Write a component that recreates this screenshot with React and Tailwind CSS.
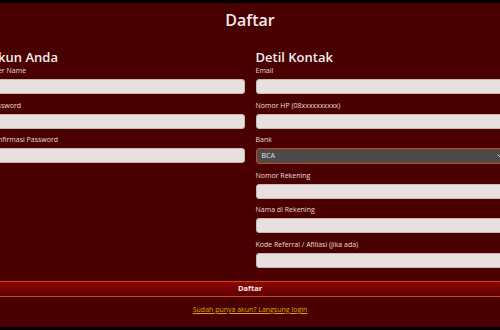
import React from 'react';

const fontStack = { fontFamily: '"Open Sans", "Noto Sans", sans-serif' };

function Field({ label, type = 'text' }) {
  return (
    <div className="mb-[6.5px]">
      <label className="block text-[7px] leading-[10px] text-[#eadcd6] mb-[3px]">{label}</label>
      <input type={type} className="block w-full h-[15px] rounded-[3px] border border-[#c9b8b4] bg-[#e8e0de] outline-none" />
    </div>
  );
}

export default function App() {
  return (
    <div className="bg-black py-[3px] h-[330px]" style={fontStack}>
      <div className="bg-[#4a0000] h-[324px] overflow-hidden flex flex-col">
        <h1 className="text-center text-[16px] font-semibold leading-[22px] text-[#f3ecec] pt-[6px]">Daftar</h1>

        <div className="flex justify-center mt-[18px]">
          <div className="w-[521px] shrink-0 grid grid-cols-2 gap-x-[11px]">
            <div>
              <h2 className="text-[13px] font-semibold leading-[16px] text-[#f3ecec] mb-[1px]">Akun Anda</h2>
              <Field label="User Name" />
              <Field label="Password" type="password" />
              <Field label="Konfirmasi Password" type="password" />
            </div>
            <div>
              <h2 className="text-[13px] font-semibold leading-[16px] text-[#f3ecec] mb-[1px]">Detil Kontak</h2>
              <Field label="Email" type="email" />
              <Field label="Nomor HP (08xxxxxxxxxx)" />
              <div className="mb-[6.5px]">
                <label className="block text-[7px] leading-[10px] text-[#eadcd6] mb-[3px]">Bank</label>
                <div className="flex items-center justify-between h-[16px] rounded-[3px] border-[1.5px] border-[#d2421f] bg-[#4b4b4b] px-[5px]">
                  <span className="text-[7px] text-[#e6e6e6]">BCA</span>
                  <svg width="6" height="4" viewBox="0 0 6 4" className="mr-[2px]">
                    <path d="M0.5 0.5 L3 3 L5.5 0.5" fill="none" stroke="#cfcfcf" strokeWidth="1" />
                  </svg>
                </div>
              </div>
              <Field label="Nomor Rekening" />
              <Field label="Nama di Rekening" />
              <Field label="Kode Referral / Afiliasi (jika ada)" />
            </div>
          </div>
        </div>

        <button className="mt-[7px] h-[16px] w-full border-y border-[#d2421f] bg-gradient-to-b from-[#8e0a02] to-[#5e0000] text-[7.5px] font-bold text-[#f3ecec]">
          Daftar
        </button>

        <div className="text-center mt-[8px] text-[7px] leading-[10px]">
          <a href="#" className="text-[#d9a40f] underline">Sudah punya akun? Langsung login</a>
        </div>
      </div>
    </div>
  );
}
